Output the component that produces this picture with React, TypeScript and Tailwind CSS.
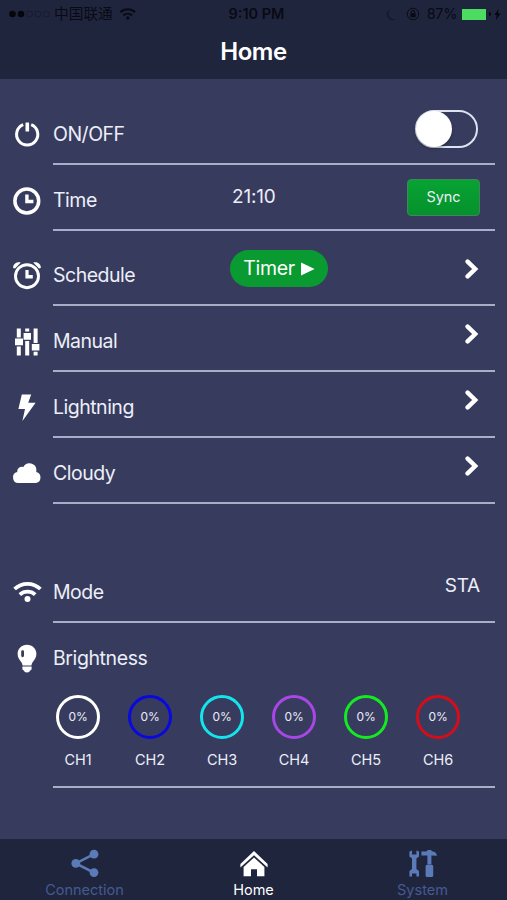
import type { ReactNode } from 'react';

const iconProps = {
  width: 30,
  height: 30,
  viewBox: '0 0 30 30',
  fill: 'currentColor',
};

function PowerIcon() {
  return (
    <svg {...iconProps}>
      <path d="M11.2 4.6A10.6 10.6 0 1 0 19.2 4.6" fill="none" stroke="currentColor" strokeWidth="3" />
      <rect x="13.5" y="2.4" width="3.6" height="9.2" rx="0.6" />
    </svg>
  );
}

function ClockIcon() {
  return (
    <svg {...iconProps}>
      <circle cx="14.8" cy="15" r="11.9" fill="none" stroke="currentColor" strokeWidth="3.5" />
      <path d="M13.2 8.6h3.4v5.1h4.8v3.5h-8.2z" />
    </svg>
  );
}

function AlarmIcon() {
  return (
    <svg {...iconProps}>
      <circle cx="15" cy="15.2" r="11.5" fill="none" stroke="currentColor" strokeWidth="2.9" />
      <path d="M13.4 9h3.2v5.1h4.2v3.3h-7.4z" />
      <path d="M1.2 7C.8 3.2 4.6.2 8.8 1.6L3 7.4zM28.8 7C29.2 3.2 25.4.2 21.2 1.6L27 7.4z" />
    </svg>
  );
}

function SlidersIcon() {
  return (
    <svg {...iconProps}>
      <path d="M4.8 1.5h4v9h-4zM3 11.6h8v6.6H3zM4.8 19.4h4v9.2h-4z" />
      <path d="M13.2 1.5h4v3h-4zM11.6 6H19v6.8h-7.4zM13.2 14h4v14.6h-4z" />
      <path d="M21.6 1.5h4V16h-4zM19.8 17h7.6v6.4h-7.6zM21.6 24.8h4v3.8h-4z" />
    </svg>
  );
}

function BoltIcon() {
  return (
    <svg {...iconProps}>
      <path d="M9.8 1.5h9.4l-3 8.3h7.4L10.4 28 13 16H6.4z" />
    </svg>
  );
}

function CloudIcon() {
  return (
    <svg {...iconProps}>
      <path d="M6.2 24A5.6 5.6 0 0 1 5.2 13a4.8 4.8 0 0 1 6.2-5 6.9 6.9 0 0 1 13 3.2 6.600 6.600 0 0 1-.2 1.800 5.600 5.600 0 0 1-.6 11z" />
    </svg>
  );
}

function WifiIcon({ size = 30 }: { size?: number }) {
  return (
    <svg {...iconProps} width={size} height={size}>
      <g fill="none" stroke="currentColor" strokeWidth="3.8">
        <path d="M2.6 11a18.6 18.6 0 0 1 25.8 0" />
        <path d="M7.8 16.6a11.6 11.6 0 0 1 15.4 0" />
      </g>
      <circle cx="15.5" cy="21" r="3" />
    </svg>
  );
}

function BulbIcon() {
  return (
    <svg {...iconProps}>
      <path
        fillRule="evenodd"
        d="M15 .8c5.4 0 9.4 4.1 9.4 9.200 0 3.600-2 5.800-3.800 8.200-.6.9-1 2-1.200 3.200h-8.800c-.2-1.200-.6-2.300-1.200-3.200-1.800-2.400-3.800-4.600-3.800-8.200C5.600 4.900 9.600.8 15 .8zM9.200 7.600v4.200c0 1.900 2.800 1.900 2.800 0V7.600c0-1.900-2.800-1.900-2.800 0z"
      />
      <path d="M10.4 22.6h9.200v2.200c0 1-.8 1.600-1.600 1.600-.2 1.300-1.200 2-3 2s-2.800-.7-3-2c-.8 0-1.600-.6-1.600-1.600z" />
    </svg>
  );
}

function Chevron() {
  return (
    <svg width="14" height="20" viewBox="0 0 14 20" fill="none" className="mr-px">
      <path d="M2.6 2.6 10.2 10l-7.600 7.400" stroke="white" strokeWidth="4.4" strokeLinecap="round" />
    </svg>
  );
}

function ShareIcon() {
  return (
    <svg {...iconProps}>
      <path d="M24 5.2 5.8 14.4 24 23.6" fill="none" stroke="currentColor" strokeWidth="2.6" />
      <circle cx="24" cy="5.2" r="4.4" />
      <circle cx="5.8" cy="14.4" r="4.4" />
      <circle cx="24" cy="23.6" r="4.4" />
    </svg>
  );
}

function HomeIcon() {
  return (
    <svg {...iconProps}>
      <path d="M1.4 15 15 2l13.6 13v3.6L15 6.2 1.4 18.600z" />
      <path d="M4.6 18 15 8.400 25.400 18v9.200H18v-7h-6v7H4.600z" />
    </svg>
  );
}

function ToolsIcon() {
  return (
    <svg {...iconProps}>
      <path d="M1.4 2.4 4 1.6v3.800h4.400V1.600l2.600.8v5L8.400 9.600v10.400l2.600 2v5.600H8.400v-3.200H4v3.200H1.400V22L4 20V9.600L1.400 7.400z" />
      <path d="M13.400 2.600h4.800L20 1h2.800l1.800 1.600c2.400.2 4 1.600 4.400 4.200l-5.600-.2v9h-4v-9h-6z" />
      <rect x="17.6" y="15.800" width="7.600" height="12.200" rx="1.6" />
    </svg>
  );
}

type RowProps = {
  icon: ReactNode;
  label: string;
  heightClass: string;
  middle?: ReactNode;
  right?: ReactNode;
  rightClass?: string;
};

function Row({ icon, label, heightClass, middle, right, rightClass = 'h-[72px]' }: RowProps) {
  return (
    <div className={`flex items-end pr-3 ${heightClass}`}>
      <div className="flex h-[61px] w-[53px] items-center justify-center text-white">{icon}</div>
      <div className="grid flex-1 grid-cols-[177px_1fr_auto] items-end border-b-2 border-[#a8aec8] pr-[15px]">
        <div className="flex h-[57px] items-center text-[19.5px] tracking-[-0.5px]">{label}</div>
        <div className={`-mt-10 flex items-center ${rightClass}`}>{middle}</div>
        <div className={`-mt-10 flex items-center ${rightClass}`}>{right}</div>
      </div>
    </div>
  );
}

const channels = [
  { name: 'CH1', ring: 'border-white' },
  { name: 'CH2', ring: 'border-[#0808df]' },
  { name: 'CH3', ring: 'border-[#14e4ec]' },
  { name: 'CH4', ring: 'border-[#a947e6]' },
  { name: 'CH5', ring: 'border-[#14ea22]' },
  { name: 'CH6', ring: 'border-[#d50d1b]' },
];

const tabs = [
  { name: 'Connection', icon: <ShareIcon />, color: 'text-[#5a7ab8]', label: 'text-[#455a91]' },
  { name: 'Home', icon: <HomeIcon />, color: 'text-white', label: 'text-white' },
  { name: 'System', icon: <ToolsIcon />, color: 'text-[#5a7ab8]', label: 'text-[#455a91]' },
];

function StatusBar() {
  return (
    <div className="grid h-7 grid-cols-[1fr_auto_1fr] items-center pl-[9px] pr-[6px] text-[#080a14]">
      <div className="flex items-center">
        <svg width="42" height="8" viewBox="0 0 42 8">
          <circle cx="3.5" cy="4" r="3.3" fill="#05060c" />
          <circle cx="12" cy="4" r="3.3" fill="#05060c" />
          <g fill="none" stroke="#101425" strokeWidth="0.6">
            <circle cx="20.5" cy="4" r="3" />
            <circle cx="29" cy="4" r="3" />
            <circle cx="37.5" cy="4" r="3" />
          </g>
        </svg>
        <span className="ml-[3px] font-['Inter','Noto_Sans_CJK_SC',sans-serif] text-[14.7px] leading-5">中国联通</span>
        <span className="ml-[6px]">
          <WifiIcon size={17} />
        </span>
      </div>
      <div className="pl-[3px] text-[14.5px] font-semibold">9:10 PM</div>
      <div className="flex items-center justify-end">
        <svg width="11" height="13" viewBox="0 0 11 13" fill="#12172a">
          <path d="M4 1a5.5 5.5 0 0 0 6 9.5A5.8 5.8 0 1 1 4 1z" />
        </svg>
        <svg width="14" height="14" viewBox="0 0 14 14" className="ml-2" fill="currentColor">
          <circle cx="7" cy="7" r="5.8" fill="none" stroke="currentColor" strokeWidth="0.9" />
          <rect x="4.4" y="6.3" width="5.2" height="4" rx="0.5" />
          <path d="M5.3 6.5V5.2a1.7 1.7 0 0 1 3.4 0v1.300" fill="none" stroke="currentColor" />
        </svg>
        <span className="ml-[7px] text-[14.5px] tracking-[-0.4px]">87%</span>
        <span className="ml-[5px] h-[11px] w-6 bg-[#4ddc62]" />
        <span className="ml-[3px] h-1 w-[2px] rounded-r bg-[#05060c]" />
        <svg width="7" height="11" viewBox="0 0 7 11" className="ml-[3px]" fill="#05060c">
          <path d="M4.5 0 .5 6h2.300L2 11l4.500-6.500H4z" />
        </svg>
      </div>
    </div>
  );
}

export default function App() {
  return (
    <div className="flex h-[900px] w-[507px] flex-col overflow-hidden bg-[#373c5e] font-['Inter','Liberation_Sans',sans-serif] text-[#eceef8]">
      <header className="h-[79px] bg-[#20253e]">
        <StatusBar />
        <h1 className="text-center text-[24px] leading-[47px] font-semibold tracking-[-0.5px] text-white">Home</h1>
      </header>

      <main className="flex-1">
        <Row
          icon={<PowerIcon />}
          label="ON/OFF"
          heightClass="h-[86px]"
          rightClass="h-[69px]"
          right={
            <button className="mr-[2px] flex h-[38px] w-[63px] items-center rounded-full border-2 border-[#dfe2f0]">
              <span className="-ml-px size-[36px] rounded-full bg-white shadow-[0_2px_3px_rgba(0,0,0,0.3)]" />
            </button>
          }
        />
        <Row
          icon={<ClockIcon />}
          label="Time"
          heightClass="h-[66px]"
          rightClass="h-[64px]"
          middle={<span className="ml-[2px] pt-px text-[19px] tracking-[-0.2px]">21:10</span>}
          right={
            <button className="h-[37px] w-[73px] rounded-[4px] border border-[#41855e] bg-linear-to-b from-[#08a333] to-[#05912d] text-[14.5px] tracking-[-0.1px]">
              Sync
            </button>
          }
        />
        <Row
          icon={<AlarmIcon />}
          label="Schedule"
          heightClass="h-[75px]"
          rightClass="h-[71px]"
          middle={
            <button className="flex h-[37px] w-[98px] items-center justify-center gap-[6px] rounded-full bg-[#099b32] pt-px text-[19.5px] tracking-[-0.3px] text-white">
              Timer
              <svg width="14" height="14" viewBox="0 0 14 14" fill="white">
                <path d="M0 .4 13.6 7 0 13.6z" />
              </svg>
            </button>
          }
          right={<Chevron />}
        />
        <Row icon={<SlidersIcon />} label="Manual" heightClass="h-[66px]" right={<Chevron />} />
        <Row icon={<BoltIcon />} label="Lightning" heightClass="h-[66px]" right={<Chevron />} />
        <Row icon={<CloudIcon />} label="Cloudy" heightClass="h-[66px]" right={<Chevron />} />
        <Row
          icon={<WifiIcon />}
          label="Mode"
          heightClass="h-[119px]"
          rightClass="h-[70px]"
          right={<span className="text-[19px] tracking-[-0.2px]">STA</span>}
        />

        <section className="pr-3">
          <div className="flex h-[71px] items-center">
            <div className="flex w-[53px] justify-center text-white">
              <BulbIcon />
            </div>
            <span className="text-[19.5px] tracking-[-0.4px]">Brightness</span>
          </div>
          <div className="ml-[53px] flex h-[94px] gap-7 border-b-2 border-[#a8aec8] pl-[3px] pt-px">
            {channels.map((channel) => (
              <div key={channel.name} className="flex w-11 flex-col items-center">
                <div
                  className={`flex size-11 items-center justify-center rounded-full border-3 text-[12px] tracking-[-0.3px] ${channel.ring}`}
                >
                  0%
                </div>
                <span className="mt-[11px] text-[14.5px] leading-5 tracking-[-0.1px]">{channel.name}</span>
              </div>
            ))}
          </div>
        </section>
      </main>

      <nav className="grid h-[61px] grid-cols-3 bg-[#20253e]">
        {tabs.map((tab) => (
          <a key={tab.name} className={`flex flex-col items-center pt-[10px] ${tab.color}`}>
            {tab.icon}
            <span className={`mt-px text-[14.5px] leading-5 ${tab.label}`}>{tab.name}</span>
          </a>
        ))}
      </nav>
    </div>
  );
}
